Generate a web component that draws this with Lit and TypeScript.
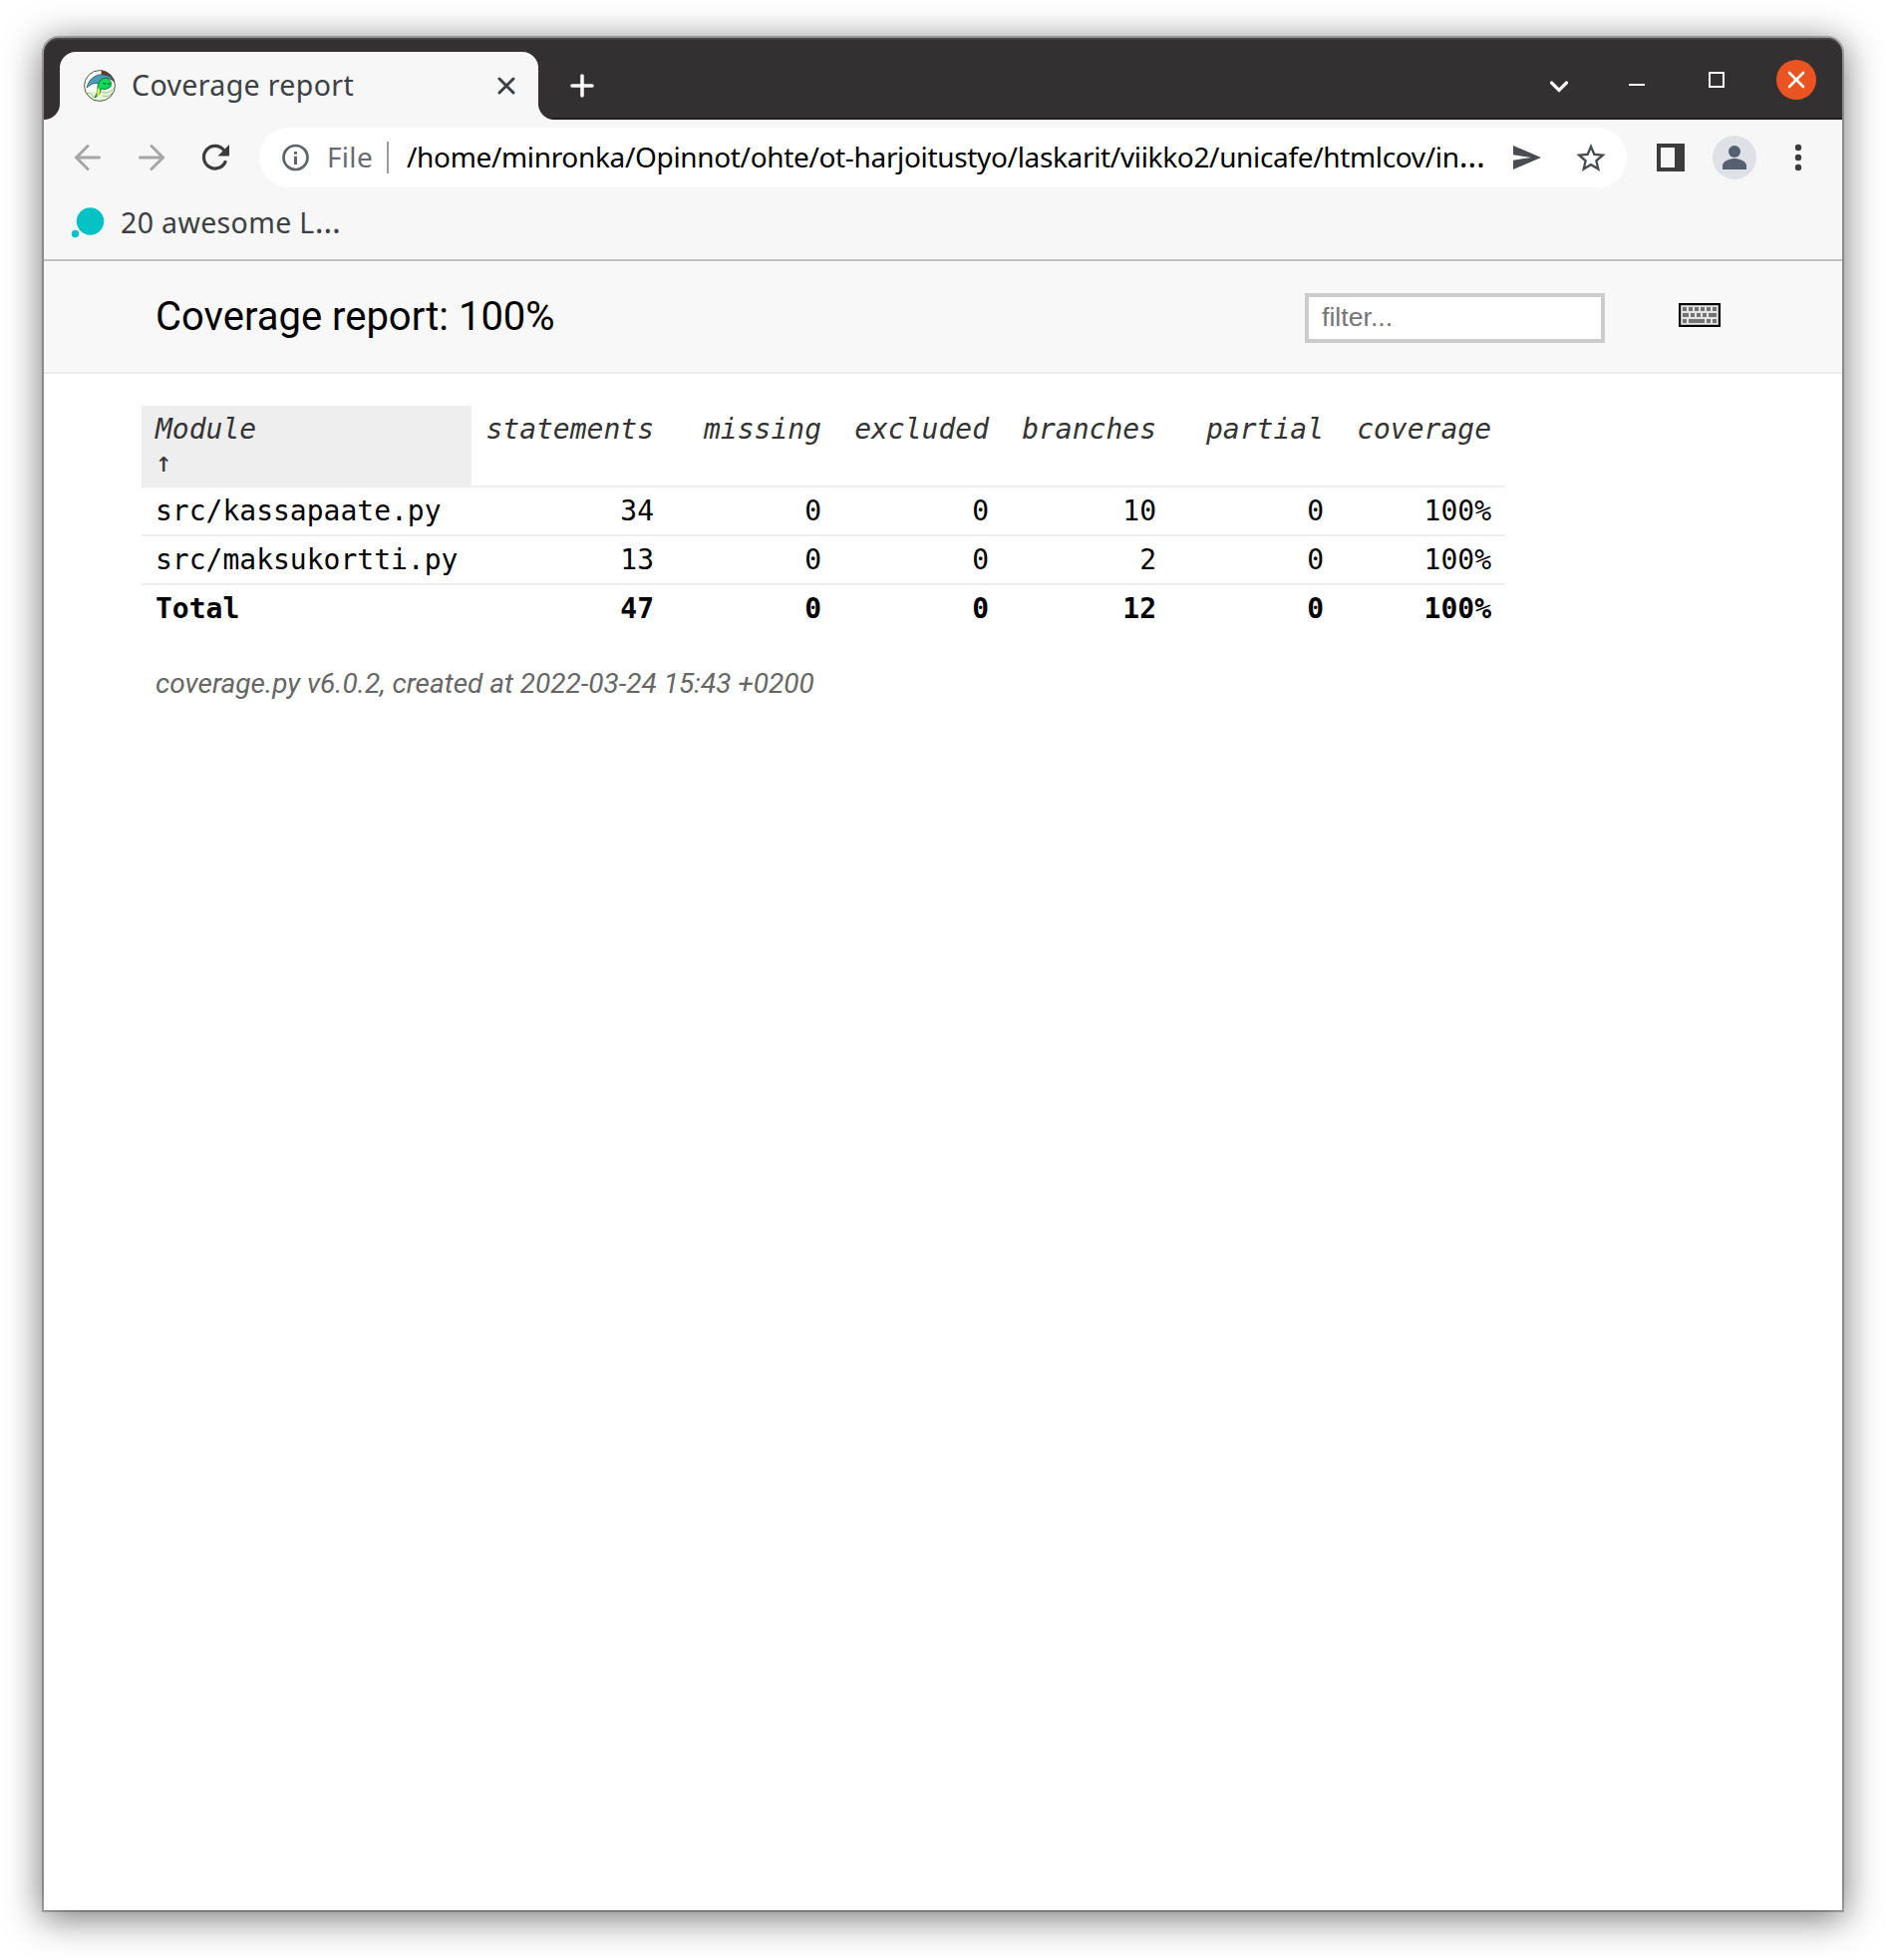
import { LitElement, html, css, svg } from "lit";
import { customElement } from "lit/decorators.js";

const tabFavicon = html`<svg width="32" height="32" viewBox="0 0 32 32">
  <defs><clipPath id="disc"><circle cx="16" cy="16" r="15.5" /></clipPath></defs>
  <circle cx="16" cy="16" r="15.5" fill="#fff" />
  <g clip-path="url(#disc)">
    <path d="M0 23 Q6 20 11 22 L14 28 L20 20 Q26 22 32 15 V32 H0Z" fill="#e4fbd3" />
    <path d="M18 0 L32 0 L32 13 Q26 7 18 6Z" fill="#6b3128" stroke="#2e1a16" stroke-width=".6" />
    <path d="M3 18 Q5 8 15 5 Q24 4 29 9 L22 9 Q17 9 15 14 Q9 12 3 18Z" fill="#4d9db8" stroke="#24505f" stroke-width=".8" />
    <path d="M14 16 Q16 8 23 8 Q29 11 27 17 Q23 21 17 19 Q18 24 11 28 Q15 21 14 16Z" fill="#0fdb55" stroke="#0c5f2b" stroke-width=".8" />
    <path d="M14.500 18 Q18 21 14 27 Q12.500 24 14.500 18Z" fill="#f2ee3c" />
    <path d="M19 13.500 q2 1.200 3.500 .2 M24 14 q1.500 .6 2.500 -.2" stroke="#064f20" stroke-width="1" fill="none" />
    <path d="M18 22 Q23 25 29 20 M19 26 Q25 28 29 23 M3 24 Q8 22 10 28" stroke="#8fa893" stroke-width=".8" fill="none" />
  </g>
  <circle cx="16" cy="16" r="15.400" fill="none" stroke="#555" stroke-width="1" />
</svg>`;

const keyRows = [
  [[4, 4], [10, 4], [16, 4], [22, 4], [28, 4], [34, 4]],
  [[4, 6], [12, 4], [18, 4], [24, 4], [30, 8]],
  [[4, 4], [10, 16], [28, 4], [34, 4]],
];

const keyboardIcon = html`<svg class="keyboard" width="42" height="24" viewBox="0 0 42 24">
  <rect x="1" y="1" width="40" height="22" fill="#e6e6e6" stroke="#000" stroke-width="2" />
  <rect x="2.500" y="2.500" width="37" height="19" fill="none" stroke="#b4b4b4" stroke-width="1" />
  ${keyRows.map((row, r) => row.map(([x, w]) => svg`<rect x=${x} y=${4 + r * 6} width=${w} height="4" fill="#747474"/>`))}
</svg>`;

@customElement("browser-tabs")
class BrowserTabs extends LitElement {
  static styles = css`
    :host { display: block; }
    .strip { display: flex; height: 82px; box-sizing: border-box; padding: 14px 26px 0 0; background: #323031;
      border-radius: 15px 15px 0 0; box-shadow: inset 0 2px #454344, inset 0 -2px #1f1d1e; }
    .flare { width: 16px; align-self: flex-end; height: 16px; }
    .left { background: radial-gradient(circle at 0 0, #323031 15.500px, #f7f7f7 16.500px); }
    .right { background: radial-gradient(circle at 100% 0, transparent 15.500px, #f7f7f7 16.500px); }
    .tab { display: flex; align-items: center; width: 480px; height: 68px; box-sizing: border-box; padding: 0 22px 0 24px;
      background: #f7f7f7; border-radius: 16px 16px 0 0; }
    .title { flex: 1; margin-left: 16px; padding-bottom: 2px; font: 28.500px/40px "Noto Sans", sans-serif; letter-spacing: 0.37px; color: #3c4043; white-space: nowrap; }
    .plus { margin: 22px 0 0 16px; }
    .controls { display: flex; margin-left: auto; height: 56px; align-items: center; }
    .chevron { margin: 14px 60px 0 0; }
    .min { margin-right: 64px; }
    .max { margin-right: 52px; }
    svg { display: block; flex: none; }
  `;
  render() {
    return html`<div class="strip">
      <div class="flare left"></div>
      <div class="tab">
        ${tabFavicon}
        <span class="title">Coverage report</span>
        <svg width="20" height="20" viewBox="0 0 20 20"><path d="M3 3L17 17M17 3L3 17" stroke="#3c4043" stroke-width="3" stroke-linecap="round" /></svg>
      </div>
      <div class="flare right"></div>
      <svg class="plus" width="24" height="24" viewBox="0 0 24 24"><path d="M2 12H22M12 2V22" stroke="#f7f7f7" stroke-width="3.600" stroke-linecap="round" /></svg>
      <div class="controls">
        <svg class="chevron" width="20" height="14" viewBox="0 0 20 14"><path d="M2.500 3L10 10.500L17.500 3" fill="none" stroke="#f7f7f7" stroke-width="3.200" stroke-linecap="round" /></svg>
        <svg class="min" width="16" height="16" viewBox="0 0 16 16"><path d="M0 13H16" stroke="#fff" stroke-width="2" /></svg>
        <svg class="max" width="16" height="16" viewBox="0 0 16 16"><rect x="1" y="1" width="14" height="14" fill="none" stroke="#fff" stroke-width="2" /></svg>
        <svg width="40" height="40" viewBox="0 0 40 40"><circle cx="20" cy="20" r="20" fill="#e95420" /><path d="M13 13L27 27M27 13L13 27" stroke="#fff" stroke-width="2.600" stroke-linecap="round" /></svg>
      </div>
    </div>`;
  }
}

@customElement("browser-toolbar")
class BrowserToolbar extends LitElement {
  static styles = css`
    :host { display: block; background: #f7f7f7; border-bottom: 2px solid #c1c1c1; font: 28px/40px "Noto Sans", sans-serif; }
    .bar { display: flex; align-items: center; height: 60px; padding: 8px 22px 0 28px; }
    .nav { display: flex; gap: 32px; margin-right: 28px; }
    .omnibox { display: flex; flex: none; align-items: center; width: 1372px; height: 60px; box-sizing: border-box; padding: 0 20px;
      background: #fff; border-radius: 30px; white-space: nowrap; }
    .scheme { margin-left: 16px; padding-bottom: 2px; width: 60px; color: #696b70; letter-spacing: 0.3px; }
    .divider { width: 2px; height: 32px; background: #9b9b9b; }
    .url { margin-left: 18px; padding-bottom: 2px; flex: 1; color: #000; letter-spacing: -0.34px; }
    .more { font-size: 33px; line-height: 1px; letter-spacing: 0; }
    .actions { display: flex; gap: 32px; }
    .tools { display: flex; align-items: center; margin-left: 26px; }
    .avatar { margin: 0 20px 0 24px; }
    .bookmarks { display: flex; align-items: center; height: 72px; box-sizing: border-box; padding: 0 0 2px 27px; color: #3c4043; }
    .bookmark { margin-left: 12px; padding-bottom: 1px; font-size: 28.500px; letter-spacing: 0.35px; }
    svg { display: block; flex: none; }
  `;
  render() {
    return html`<div class="bar">
        <div class="nav">
          <svg width="32" height="32" viewBox="0 0 32 32"><path d="M27.500 16H4.500M16 4.500L4.500 16L16 27.500" fill="none" stroke="#a6a6a6" stroke-width="3" stroke-linecap="round" /></svg>
          <svg width="32" height="32" viewBox="0 0 32 32"><path d="M4.500 16H27.500M16 4.500L27.500 16L16 27.500" fill="none" stroke="#a6a6a6" stroke-width="3" stroke-linecap="round" /></svg>
          <svg width="32" height="32" viewBox="0 0 32 32"><path d="M26 20.500A11.300 11.300 0 1 1 24.500 8.500" fill="none" stroke="#3c3c3c" stroke-width="3.200" stroke-linecap="round" /><path d="M30 3V14.500H18.500Z" fill="#3c3c3c" /></svg>
        </div>
        <div class="omnibox">
          <svg width="32" height="32" viewBox="0 0 32 32"><circle cx="16.500" cy="16" r="12" fill="none" stroke="#5f6368" stroke-width="2.700" /><path d="M16.500 10V12.700M16.500 14.800V23" stroke="#5f6368" stroke-width="3" /></svg>
          <span class="scheme">File</span>
          <span class="divider"></span>
          <span class="url">/home/minronka/Opinnot/ohte/ot-harjoitustyo/laskarit/viikko2/unicafe/htmlcov/in<span class="more">…</span></span>
          <span class="actions">
            <svg width="32" height="32" viewBox="0 0 32 32"><path d="M2 4L30 16L2 28V18.700L20 16L2 13.300Z" fill="#494c50" /></svg>
            <svg width="32" height="32" viewBox="1.100 0.600 21.800 21.800"><path fill="#494c50" d="M22 9.240l-7.190-.62L12 2 9.190 8.630 2 9.240l5.460 4.730L5.820 21 12 17.270 18.180 21l-1.630-7.030L22 9.240zM12 15.400l-3.760 2.270 1-4.280-3.320-2.880 4.380-.38L12 6.100l1.710 4.040 4.380.38-3.320 2.880 1 4.280L12 15.400z" /></svg>
          </span>
        </div>
        <div class="tools">
          <svg width="36" height="32" viewBox="0 0 36 32"><path d="M4 2H32V30H4ZM8 6V26H22V6Z" fill="#3c3c3c" fill-rule="evenodd" /></svg>
          <svg class="avatar" width="44" height="44" viewBox="0 0 44 44"><circle cx="22" cy="22" r="22" fill="#dee1e6" /><circle cx="22" cy="16" r="6" fill="#576071" /><path d="M10 34V30C10 25.500 18 23 22 23S34 25.500 34 30V34Z" fill="#576071" /></svg>
          <svg width="44" height="32" viewBox="0 0 44 32"><g fill="#3c3c3c"><circle cx="22" cy="6" r="3.200" /><circle cx="22" cy="16" r="3.200" /><circle cx="22" cy="26" r="3.200" /></g></svg>
        </div>
      </div>
      <div class="bookmarks">
        <svg width="38" height="34" viewBox="0 0 38 34"><circle cx="19.500" cy="16" r="13.700" fill="#05c3c5" /><circle cx="4.500" cy="28.500" r="3.700" fill="#05c3c5" /></svg>
        <span class="bookmark">20 awesome L<span class="more">…</span></span>
      </div>`;
  }
}

interface Row { name: string; values: string[] }

@customElement("coverage-report")
class CoverageReport extends LitElement {
  static styles = css`
    :host { display: block; font: 32px/1.2 Roboto, sans-serif; color: #000; }
    header { display: flex; align-items: center; height: 111px; padding: 0 122px 0 112px; background: #f8f8f8; border-bottom: 2px solid #eee; }
    h1 { flex: 1; margin: 0; font-size: 40px; line-height: 48px; font-weight: 400; }
    input { width: 301px; height: 50px; box-sizing: border-box; margin: 2px 74px 0 0; padding: 2px 13px; border: 4px solid #ccc;
      background: #fff; font: 26.667px "Liberation Sans", sans-serif; outline: none; border-radius: 0; }
    input::placeholder { color: #757575; }
    .keyboard { display: block; margin-top: -3px; }
    table { table-layout: fixed; width: 1368px; margin: 32px 0 0 98px; border-collapse: separate; border-spacing: 0;
      font: 28px/33px "DejaVu Sans Mono", monospace; }
    .name { width: 331px; text-align: left; }
    .statements { width: 197px; }
    th, td { box-sizing: border-box; padding: 7px 14px; text-align: right; vertical-align: top; border-bottom: 2px solid #eee; }
    th { font-weight: 400; font-style: italic; color: #333; white-space: nowrap; }
    th.name { background: #eee; }
    .arrow { display: block; font-style: normal; }
    .total td { border-bottom: 0; font-weight: 700; }
    footer { margin: 35px 0 0 112px; font-size: 28px; line-height: 34px; font-style: italic; color: #666; }
  `;
  private columns = ["statements", "missing", "excluded", "branches", "partial", "coverage"];
  private rows: Row[] = [
    { name: "src/kassapaate.py", values: ["34", "0", "0", "10", "0", "100%"] },
    { name: "src/maksukortti.py", values: ["13", "0", "0", "2", "0", "100%"] },
    { name: "Total", values: ["47", "0", "0", "12", "0", "100%"] },
  ];
  render() {
    return html`<header>
        <h1>Coverage report: 100%</h1>
        <input type="text" placeholder="filter..." />
        ${keyboardIcon}
      </header>
      <table>
        <thead><tr>
          <th class="name">Module<span class="arrow">↑</span></th>
          ${this.columns.map((c) => html`<th class=${c}>${c}</th>`)}
        </tr></thead>
        <tbody>${this.rows.map((r) => html`<tr class=${r.name === "Total" ? "total" : "file"}>
          <td class="name">${r.name}</td>${r.values.map((v) => html`<td>${v}</td>`)}
        </tr>`)}</tbody>
      </table>
      <footer>coverage.py v6.0.2, created at 2022-03-24 15:43 +0200</footer>`;
  }
}

@customElement("app-root")
class AppRoot extends LitElement {
  static styles = css`
    :host { display: block; box-sizing: border-box; height: 1966px; padding: 38px 44px 50px; background: #fff; overflow: hidden; }
    .window { height: 1878px; background: #fff; border-radius: 15px 15px 0 0;
      box-shadow: 0 0 0 2px rgba(0, 0, 0, 0.25), 0 6px 36px 3px rgba(0, 0, 0, 0.52); }
  `;
  render() {
    return html`<div class="window">
      <browser-tabs></browser-tabs>
      <browser-toolbar></browser-toolbar>
      <coverage-report></coverage-report>
    </div>`;
  }
}
